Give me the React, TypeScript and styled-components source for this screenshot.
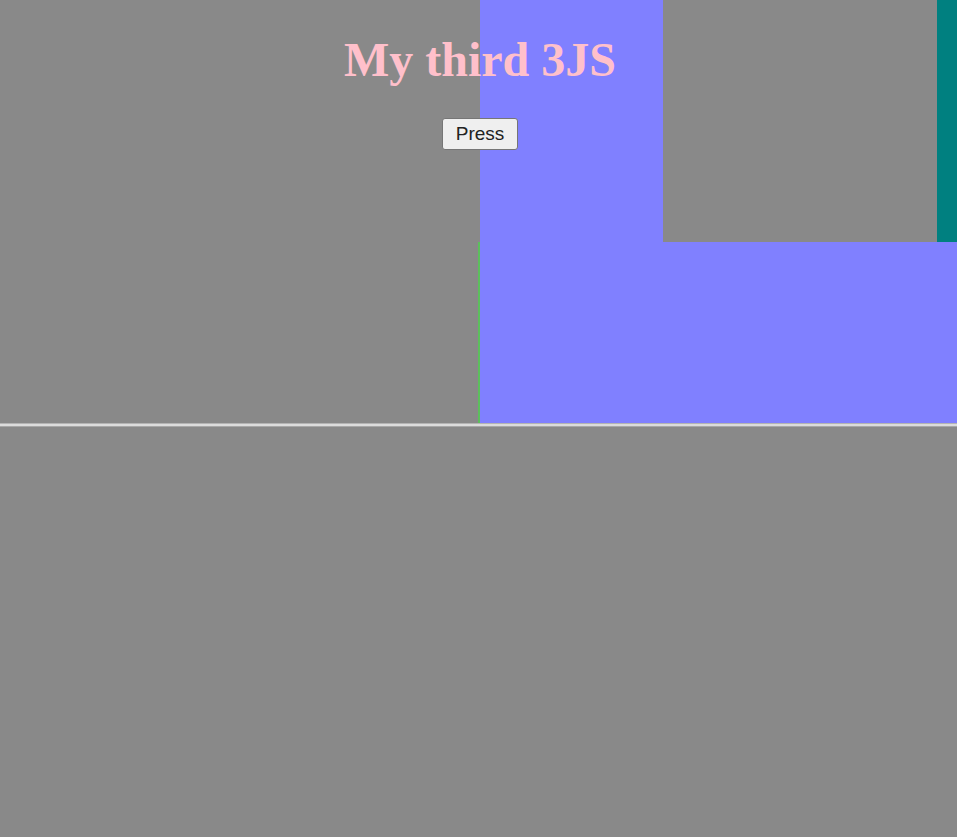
import React from 'react';
import styled, { createGlobalStyle } from 'styled-components';

const GlobalStyle = createGlobalStyle`
    html, body {
        margin: 0;
        padding: 0;
        background: #898989;
        overflow: hidden;
    }
`;

const Stage = styled.div`
    position: relative;
    width: 100vw;
    height: 100vh;
    background: #898989;
`;

// the rendered 3D scene, drawn flat
const Scene = styled.svg`
    position: absolute;
    inset: 0;
    display: block;
`;

const Overlay = styled.div`
    position: relative;
    display: flex;
    flex-direction: column;
    align-items: center;
    padding: 32px 0 0 3px;
    gap: 31px;
`;

const Title = styled.h1`
    margin: 0;
    font-family: "Liberation Serif", "Times New Roman", serif;
    font-size: 48px;
    font-weight: bold;
    color: #ffc0cb;
`;

const PressButton = styled.button`
    width: 76px;
    height: 32px;
    padding: 0;
    font-family: "Liberation Sans", Arial, sans-serif;
    font-size: 19px;
    color: #222;
    background: #efefef;
    border: 1px solid #767676;
    border-radius: 3px;
    cursor: pointer;
`;

const App: React.FC = () => {
    return (
        <Stage>
            <GlobalStyle />
            <Scene width="957" height="837" viewBox="0 0 957 837">
                <rect x="480" y="0" width="477" height="423" fill="#8080ff" />
                <rect x="663" y="0" width="274" height="242" fill="#898989" />
                <rect x="937" y="0" width="20" height="242" fill="#008080" />
                <rect x="478" y="242" width="2" height="181" fill="#5cbf5c" />
                <rect x="0" y="423" width="957" height="1" fill="#b4b4b4" />
                <rect x="0" y="424" width="957" height="2" fill="#dcdcdc" />
                <rect x="0" y="426" width="957" height="1" fill="#a8a8a8" />
            </Scene>
            <Overlay>
                <Title>My third 3JS</Title>
                <PressButton>Press</PressButton>
            </Overlay>
        </Stage>
    );
};

export default App;
